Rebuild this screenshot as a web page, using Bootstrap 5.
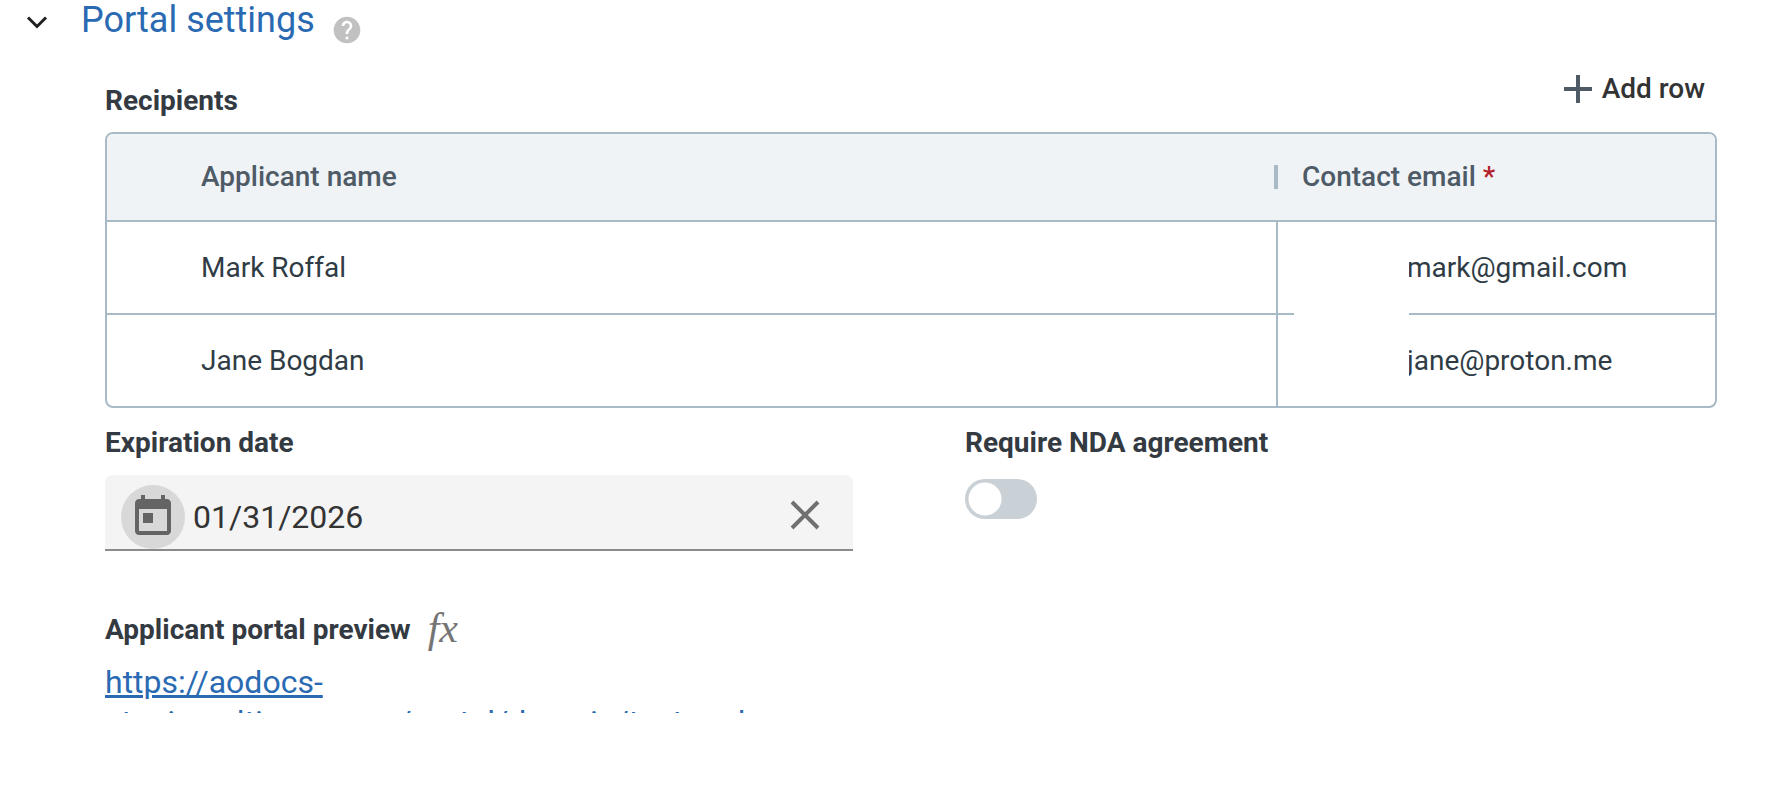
<!DOCTYPE html>
<html lang="en">
<head>
<meta charset="utf-8">
<meta name="viewport" content="width=device-width, initial-scale=1">
<title>Portal settings</title>
<link href="https://cdn.jsdelivr.net/npm/bootstrap@5.3.0/dist/css/bootstrap.min.css" rel="stylesheet">
<style>
  :root { --line: #a8bac6; --ink: #343a42; --brand: #2a6ab2; }
  body { font-family: Roboto, "Liberation Sans", sans-serif; font-size: 28px; line-height: 40px; color: var(--ink); background: #fff; }
  svg { display: block; flex: none; }
  .section-head { padding-left: 24px; }
  .section-title { font-size: 36px; font-weight: 400; line-height: 40px; color: var(--brand); margin-left: 31px; }
  .help-button { margin-top: 14px; }
  .section-body { padding: 0 63px 0 105px; }
  .list-head { padding-top: 23px; margin-bottom: 11px; }
  .list-head .field-title { margin-top: 12px; }
  .field-title { font-size: 28px; font-weight: 700; line-height: 40px; color: var(--ink); }
  .add-row { color: #333; font-size: 28px; font-weight: 500; line-height: 40px; gap: 9px; margin-right: 12px; }
  .recipients-box { border: 2px solid var(--line); border-radius: 8px; overflow: hidden; }
  .recipients { border-collapse: separate; border-spacing: 0; table-layout: fixed; width: 100%; }
  .recipients th { height: 88px; padding: 0 0 0 94px; background: #eff3f6; color: #4e5b67; font-weight: 500; border-bottom: 2px solid var(--line); }
  .recipients th + th { width: 439px; padding-left: 0; }
  .recipients td { height: 93px; padding: 0 0 0 94px; color: #303c45; border-bottom: 2px solid var(--line); }
  .recipients td + td { padding-left: 129px; border-left: 2px solid var(--line); }
  .recipients tr:last-child td { height: 91px; border-bottom: 0; }
  .tick { width: 4px; height: 24px; background: var(--line); margin-right: 24px; margin-left: -2px; }
  .required { color: #b3202a; }
  .redaction { top: 90px; bottom: 0; right: 306px; width: 115px; background: #fff; }
  .fields { display: grid; grid-template-columns: 748fr 752fr; column-gap: 112px; margin-top: 15px; }
  .date-field { height: 76px; margin-top: 12px; padding: 8px 16px 0; background: #f4f4f4; border-bottom: 2px solid #8b8b8b; border-radius: 8px 8px 0 0; }
  .cal-button { width: 64px; height: 64px; background: #d8d8d8; color: #646464; margin-top: 2px; }
  .date-input { font-size: 32px; color: #333; line-height: 40px; padding: 2px 0 0 8px; background: transparent; outline: 0; min-width: 0; }
  .clear-button { width: 64px; height: 64px; color: #707070; }
  .nda-switch { padding: 0; min-height: 0; margin-top: 16px; }
  .nda-switch .form-check-input { float: none; display: block; width: 72px; height: 40px; margin: 0; border: 0; background-color: #c9d0d6; background-size: 40px 40px; background-position: left center;
    background-image: radial-gradient(circle at 20px 20px, #fff 16px, transparent 17px); background-repeat: no-repeat; }
  .preview { margin-top: 59px; }
  .fx { font-family: "Liberation Serif", serif; font-style: italic; font-size: 42px; line-height: 36px; color: #757575; margin: 0 0 4px 17px; }
  .preview-link { height: 51px; overflow: hidden; font-size: 32px; line-height: 40px; margin-top: 12px; }
  .preview-link a { color: var(--brand); }
</style>
</head>
<body>
<main>
  <header class="section-head d-flex align-items-start">
    <button type="button" class="btn p-0 border-0 rounded-0 mt-2" aria-label="Collapse section">
      <svg width="26" height="28" viewBox="0 0 26 28" fill="none" stroke="#202020" stroke-width="3"><path d="M4 9.500l9 9 9-9"/></svg>
    </button>
    <h2 class="section-title mb-0">Portal settings</h2>
    <button type="button" class="help-button btn p-0 border-0 ms-3" aria-label="Help">
      <svg width="32" height="32" viewBox="0 0 24 24" fill="#c1c1c1"><path d="M12 2C6.480 2 2 6.480 2 12s4.480 10 10 10 10-4.480 10-10S17.520 2 12 2zm1 17h-2v-2h2v2zm2.070-7.750l-.9.920C13.450 12.900 13 13.500 13 15h-2v-.5c0-1.100.45-2.100 1.170-2.830l1.240-1.260c.37-.36.590-.86.590-1.410 0-1.100-.9-2-2-2s-2 .9-2 2H8c0-2.210 1.790-4 4-4s4 1.790 4 4c0 .88-.36 1.680-.93 2.250z"/></svg>
    </button>
  </header>

  <section class="section-body">
    <div class="list-head d-flex justify-content-between align-items-start">
      <h3 class="field-title mb-0">Recipients</h3>
      <button type="button" class="add-row btn p-0 border-0 rounded-0 d-flex align-items-center">
        <svg width="30" height="30" viewBox="0 0 30 30" stroke="#4e5b67" stroke-width="4"><path d="M15 1v28M1 15h28"/></svg>
        <span>Add row</span>
      </button>
    </div>

    <div class="recipients-box position-relative">
      <table class="recipients">
        <thead>
          <tr>
            <th scope="col">Applicant name</th>
            <th scope="col"><div class="d-flex align-items-center"><span class="tick"></span><span>Contact email <span class="required">*</span></span></div></th>
          </tr>
        </thead>
        <tbody>
          <tr><td>Mark Roffal</td><td>mark@gmail.com</td></tr>
          <tr><td>Jane Bogdan</td><td>jane@proton.me</td></tr>
        </tbody>
      </table>
      <div class="redaction position-absolute"></div>
    </div>

    <div class="fields">
      <div>
        <label class="field-title d-block" for="expiration">Expiration date</label>
        <div class="date-field d-flex align-items-start">
          <button type="button" class="cal-button btn p-0 border-0 rounded-circle d-flex align-items-center justify-content-center flex-shrink-0" aria-label="Open calendar">
            <svg width="48" height="48" viewBox="0 0 24 24" fill="currentColor"><path d="M19 3h-1V1h-2v2H8V1H6v2H5c-1.110 0-1.990.9-1.990 2L3 19c0 1.100.89 2 2 2h14c1.100 0 2-.9 2-2V5c0-1.100-.9-2-2-2zm0 16H5V8h14v11zM7 10h5v5H7z"/></svg>
          </button>
          <input class="date-input border-0 flex-grow-1 align-self-center" id="expiration" type="text" value="01/31/2026">
          <button type="button" class="clear-button btn p-0 border-0 d-flex align-items-center justify-content-center flex-shrink-0" aria-label="Clear date">
            <svg width="30" height="30" viewBox="0 0 30 30" fill="none" stroke="currentColor" stroke-width="4"><path d="M2 2l26 26M28 2L2 28"/></svg>
          </button>
        </div>
      </div>
      <div>
        <label class="field-title d-block" for="nda">Require NDA agreement</label>
        <div class="nda-switch form-check form-switch">
          <input class="form-check-input" type="checkbox" role="switch" id="nda">
        </div>
      </div>
      <div class="preview">
        <div class="d-flex align-items-center">
          <h3 class="field-title mb-0">Applicant portal preview</h3>
          <span class="fx">fx</span>
        </div>
        <div class="preview-link"><a href="#">https://aodocs-<br>staging.altirnao.com/portal/domain/test.aodocs</a></div>
      </div>
    </div>
  </section>
</main>
<script src="https://cdn.jsdelivr.net/npm/bootstrap@5.3.0/dist/js/bootstrap.bundle.min.js"></script>
</body>
</html>
